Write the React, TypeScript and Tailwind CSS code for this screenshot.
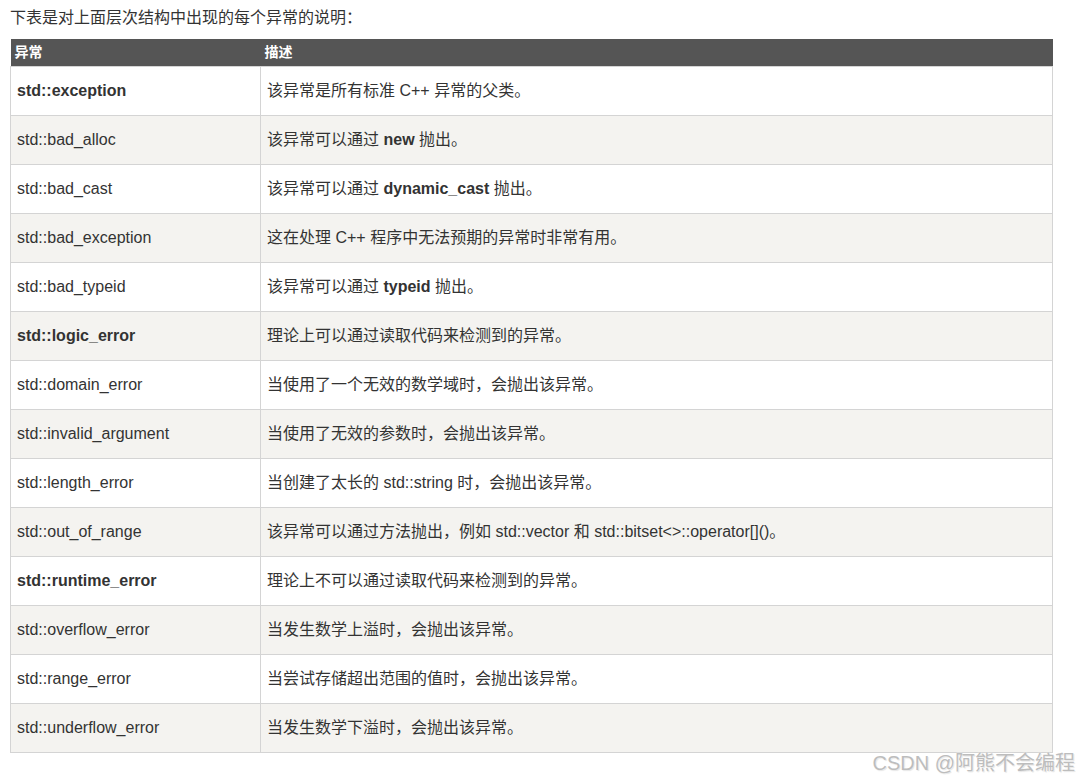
const rows: { name: string; bold?: boolean; desc: React.ReactNode }[] = [
  { name: "std::exception", bold: true, desc: "该异常是所有标准 C++ 异常的父类。" },
  { name: "std::bad_alloc", desc: <>该异常可以通过 <b>new</b> 抛出。</> },
  { name: "std::bad_cast", desc: <>该异常可以通过 <b>dynamic_cast</b> 抛出。</> },
  { name: "std::bad_exception", desc: "这在处理 C++ 程序中无法预期的异常时非常有用。" },
  { name: "std::bad_typeid", desc: <>该异常可以通过 <b>typeid</b> 抛出。</> },
  { name: "std::logic_error", bold: true, desc: "理论上可以通过读取代码来检测到的异常。" },
  { name: "std::domain_error", desc: "当使用了一个无效的数学域时，会抛出该异常。" },
  { name: "std::invalid_argument", desc: "当使用了无效的参数时，会抛出该异常。" },
  { name: "std::length_error", desc: "当创建了太长的 std::string 时，会抛出该异常。" },
  { name: "std::out_of_range", desc: "该异常可以通过方法抛出，例如 std::vector 和 std::bitset<>::operator[]()。" },
  { name: "std::runtime_error", bold: true, desc: "理论上不可以通过读取代码来检测到的异常。" },
  { name: "std::overflow_error", desc: "当发生数学上溢时，会抛出该异常。" },
  { name: "std::range_error", desc: "当尝试存储超出范围的值时，会抛出该异常。" },
  { name: "std::underflow_error", desc: "当发生数学下溢时，会抛出该异常。" },
];

export default function App() {
  return (
    <div className="relative w-[1080px] h-[781px] bg-white text-[#333] font-['Liberation_Sans','Noto_Sans_CJK_SC',sans-serif] overflow-hidden">
      <p className="pl-[10px] pt-[8px] text-[16px] leading-[20px]">下表是对上面层次结构中出现的每个异常的说明：</p>

      <table className="ml-[10px] mt-[11px] w-[1043px] border-collapse text-[16px] table-fixed">
        <colgroup>
          <col className="w-[250px]" />
          <col />
        </colgroup>
        <thead>
          <tr className="h-[27px] bg-[#555555] text-white text-[14px] font-bold text-left">
            <th className="pl-[4px] py-0 font-bold">异常</th>
            <th className="pl-[4px] py-0 font-bold">描述</th>
          </tr>
        </thead>
        <tbody>
          {rows.map((r, i) => (
            <tr key={r.name} className={`h-[49px] ${i % 2 === 1 ? "bg-[#f4f3f0]" : "bg-white"}`}>
              <td className={`border border-[#d4d4d4] pl-[6px] py-0 ${r.bold ? "font-bold" : ""}`}>{r.name}</td>
              <td className="border border-[#d4d4d4] pl-[6px] py-0">{r.desc}</td>
            </tr>
          ))}
        </tbody>
      </table>

      {/* 水印 */}
      <div className="absolute right-[5px] top-[751px] text-[20px] leading-[25px] text-[#bdbdbd] [text-shadow:0_0_2px_#fff,1px_1px_1px_#e0e0e0]">
        CSDN @阿熊不会编程
      </div>
    </div>
  );
}
